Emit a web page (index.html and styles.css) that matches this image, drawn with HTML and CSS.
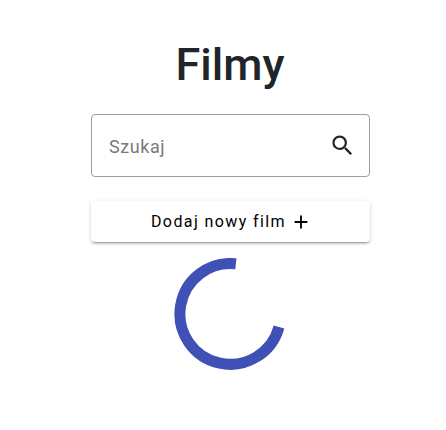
FILE: index.html
```html
<!DOCTYPE html>
<html lang="pl">
<head>
<meta charset="utf-8">
<title>Filmy</title>
<link rel="stylesheet" href="styles.css">
</head>
<body>
<main class="page">
  <h1 class="title">Filmy</h1>
  <label class="search">
    <span class="search-label">Szukaj</span>
    <svg class="search-icon" viewBox="0 0 24 24"><path d="M15.5 14h-.79l-.28-.27A6.471 6.471 0 0 0 16 9.5 6.5 6.5 0 1 0 9.5 16c1.61 0 3.09-.59 4.23-1.57l.27.28v.79l5 4.99L20.49 19l-4.99-5zm-6 0C7.01 14 5 11.99 5 9.5S7.01 5 9.5 5 14 7.01 14 9.5 11.99 14 9.5 14z"/></svg>
  </label>
  <button class="add" type="button">
    <span>Dodaj nowy film</span>
    <svg class="add-icon" viewBox="0 0 24 24"><path d="M19 13h-6v6h-2v-6H5v-2h6V5h2v6h6v2z"/></svg>
  </button>
  <svg class="spinner" viewBox="0 0 112 112"><path d="M61.9 5.8A50.4 50.4 0 1 0 105 69"/></svg>
</main>
</body>
</html>
```

FILE: styles.css
```css
body {
  margin: 0;
  background: #fff;
  color: #212529;
  font-family: Roboto, sans-serif;
}

.page {
  display: flex;
  flex-direction: column;
  align-items: center;
  width: 279px;
  margin-left: 91px;
  padding-top: 38px;
}

.title {
  margin: 0 1px 22px 0;
  font-size: 45px;
  font-weight: 500;
  line-height: 54px;
}

.search {
  box-sizing: border-box;
  display: flex;
  align-items: center;
  justify-content: space-between;
  width: 100%;
  height: 63px;
  padding: 0 13px 0 17px;
  border: 1px solid #9e9e9e;
  border-radius: 4px;
}

.search-label {
  padding-top: 2px;
  color: #7a7a7a;
  font-size: 18px;
  letter-spacing: 0.56px;
}

.search-icon {
  width: 27px;
  height: 27px;
  fill: #212529;
}

.add {
  display: flex;
  align-items: center;
  justify-content: center;
  gap: 4px;
  width: 100%;
  height: 41px;
  margin: 24px 0 16px;
  padding: 0 0 0 2px;
  border: 0;
  border-radius: 4px;
  background: #fff;
  color: #000;
  font: 450 16px Roboto, sans-serif;
  letter-spacing: 1.4px;
  box-shadow: 0 3px 1px -2px rgba(0, 0, 0, .2), 0 2px 2px 0 rgba(0, 0, 0, .14), 0 1px 5px 0 rgba(0, 0, 0, .12);
}

.add-icon {
  width: 22px;
  height: 22px;
}

.spinner {
  width: 112px;
  height: 112px;
  margin-right: 1px;
  fill: none;
  stroke: #3f51b5;
  stroke-width: 11;
}
```
